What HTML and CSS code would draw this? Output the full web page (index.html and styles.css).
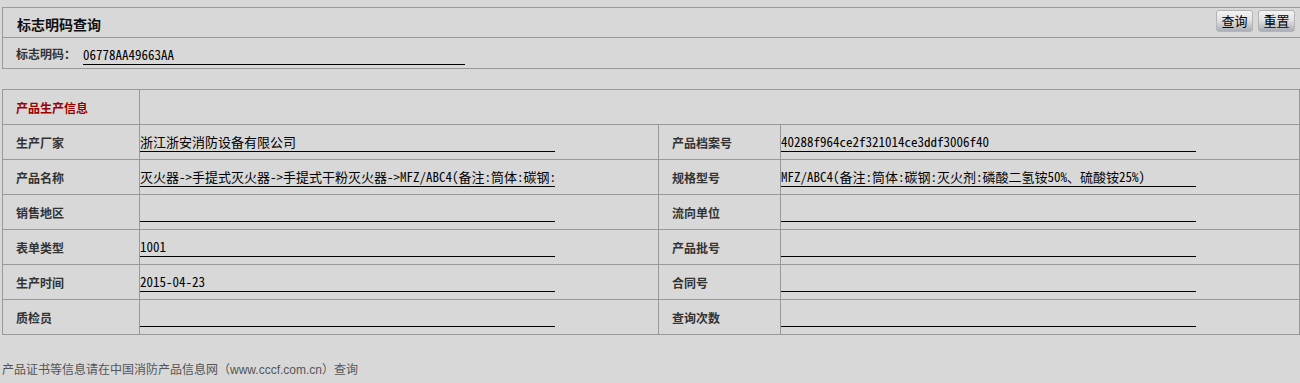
FILE: index.html
```html
<!DOCTYPE html>
<html lang="zh-CN">
<head>
<meta charset="utf-8">
<title>标志明码查询</title>
<link rel="stylesheet" href="styles.css">
</head>
<body>
<div class="page">
  <div class="query-box">
    <div class="qb-head">
      <h1 class="qb-title">标志明码查询</h1>
      <div class="qb-btns">
        <button class="btn" type="button">查询</button>
        <button class="btn" type="button">重置</button>
      </div>
    </div>
    <div class="qb-row">
      <label class="qb-label">标志明码：</label>
      <input class="line-input code-input" type="text" value="06778AA49663AA">
    </div>
  </div>

  <table class="info">
    <colgroup>
      <col class="c-label">
      <col class="c-value">
      <col class="c-label2">
      <col class="c-value2">
    </colgroup>
    <tr>
      <th class="sec-title">产品生产信息</th>
      <td colspan="3"></td>
    </tr>
    <tr>
      <th>生产厂家</th>
      <td><input class="line-input" type="text" value="浙江浙安消防设备有限公司" readonly></td>
      <th>产品档案号</th>
      <td><input class="line-input" type="text" value="40288f964ce2f321014ce3ddf3006f40" readonly></td>
    </tr>
    <tr>
      <th>产品名称</th>
      <td><input class="line-input" type="text" value="灭火器->手提式灭火器->手提式干粉灭火器->MFZ/ABC4(备注:筒体:碳钢:灭火剂:磷酸二氢铵50%、硫酸铵25%)" readonly></td>
      <th>规格型号</th>
      <td><input class="line-input" type="text" value="MFZ/ABC4(备注:筒体:碳钢:灭火剂:磷酸二氢铵50%、硫酸铵25%)" readonly></td>
    </tr>
    <tr>
      <th>销售地区</th>
      <td><input class="line-input" type="text" value="" readonly></td>
      <th>流向单位</th>
      <td><input class="line-input" type="text" value="" readonly></td>
    </tr>
    <tr>
      <th>表单类型</th>
      <td><input class="line-input" type="text" value="1001" readonly></td>
      <th>产品批号</th>
      <td><input class="line-input" type="text" value="" readonly></td>
    </tr>
    <tr>
      <th>生产时间</th>
      <td><input class="line-input" type="text" value="2015-04-23" readonly></td>
      <th>合同号</th>
      <td><input class="line-input" type="text" value="" readonly></td>
    </tr>
    <tr>
      <th>质检员</th>
      <td><input class="line-input" type="text" value="" readonly></td>
      <th>查询次数</th>
      <td><input class="line-input" type="text" value="" readonly></td>
    </tr>
  </table>

  <p class="note">产品证书等信息请在中国消防产品信息网（www.cccf.com.cn）查询</p>
</div>
</body>
</html>
```

FILE: styles.css
```css
html, body {
  margin: 0;
  padding: 0;
  background: #d8d8d8;
  overflow: hidden;
}

body {
  font-family: "Noto Sans CJK SC", "Liberation Sans", sans-serif;
  font-size: 12px;
  color: #222;
}

.page {
  padding: 7px 0 0 2px;
}

.query-box {
  border: 1px solid #999;
  border-right: none;
}

.qb-head {
  display: flex;
  align-items: center;
  justify-content: space-between;
  height: 29px;
  border-bottom: 1px solid #999;
}

.qb-title {
  margin: 0;
  padding: 3px 0 0 14px;
  font-size: 14px;
  font-weight: bold;
  color: #111;
  line-height: 20px;
}

.qb-btns {
  display: flex;
  gap: 5px;
  padding: 0 5px 0 0;
  align-self: flex-start;
  margin-top: 2px;
}

.btn {
  width: 37px;
  height: 22px;
  padding: 0;
  border: 1px solid #b4b4b4;
  border-radius: 3px;
  background: linear-gradient(#f4f4f4 0%, #e2e2e2 45%, #c4c6cb 75%, #a9adb5 100%);
  font-family: "Noto Sans CJK SC", sans-serif;
  font-size: 13px;
  line-height: 18px;
  color: #000;
}

.qb-row {
  display: flex;
  align-items: center;
  height: 30px;
}

.qb-label {
  padding-left: 13px;
  width: 67px;
  font-weight: bold;
  color: #333;
}

.line-input {
  display: block;
  box-sizing: border-box;
  width: 415px;
  height: 20px;
  margin: 0;
  padding: 0;
  border: none;
  border-bottom: 1px solid #000;
  background: transparent;
  font-family: "Noto Sans Mono CJK SC", "Noto Sans CJK SC", monospace;
  font-size: 13px;
  line-height: 19px;
  color: #000;
  outline: none;
}

.code-input {
  width: 382px;
  margin-top: 3px;
}

.info {
  margin-top: 20px;
  width: 1297px;
  border-collapse: collapse;
  table-layout: fixed;
}

.c-label { width: 137px; }
.c-value { width: 519px; }
.c-label2 { width: 122px; }
.c-value2 { width: 519px; }

.info th,
.info td {
  border: 1px solid #999;
  height: 34px;
  padding: 0;
  vertical-align: middle;
}

.info th {
  text-align: left;
  padding-left: 13px;
  font-weight: bold;
  color: #333;
}

.info th.sec-title {
  color: #990000;
}

.note {
  margin: 27px 0 0 0;
  font-family: "Liberation Sans", "Noto Sans CJK SC", sans-serif;
  color: #555;
  font-size: 12px;
  line-height: 16px;
}
```
